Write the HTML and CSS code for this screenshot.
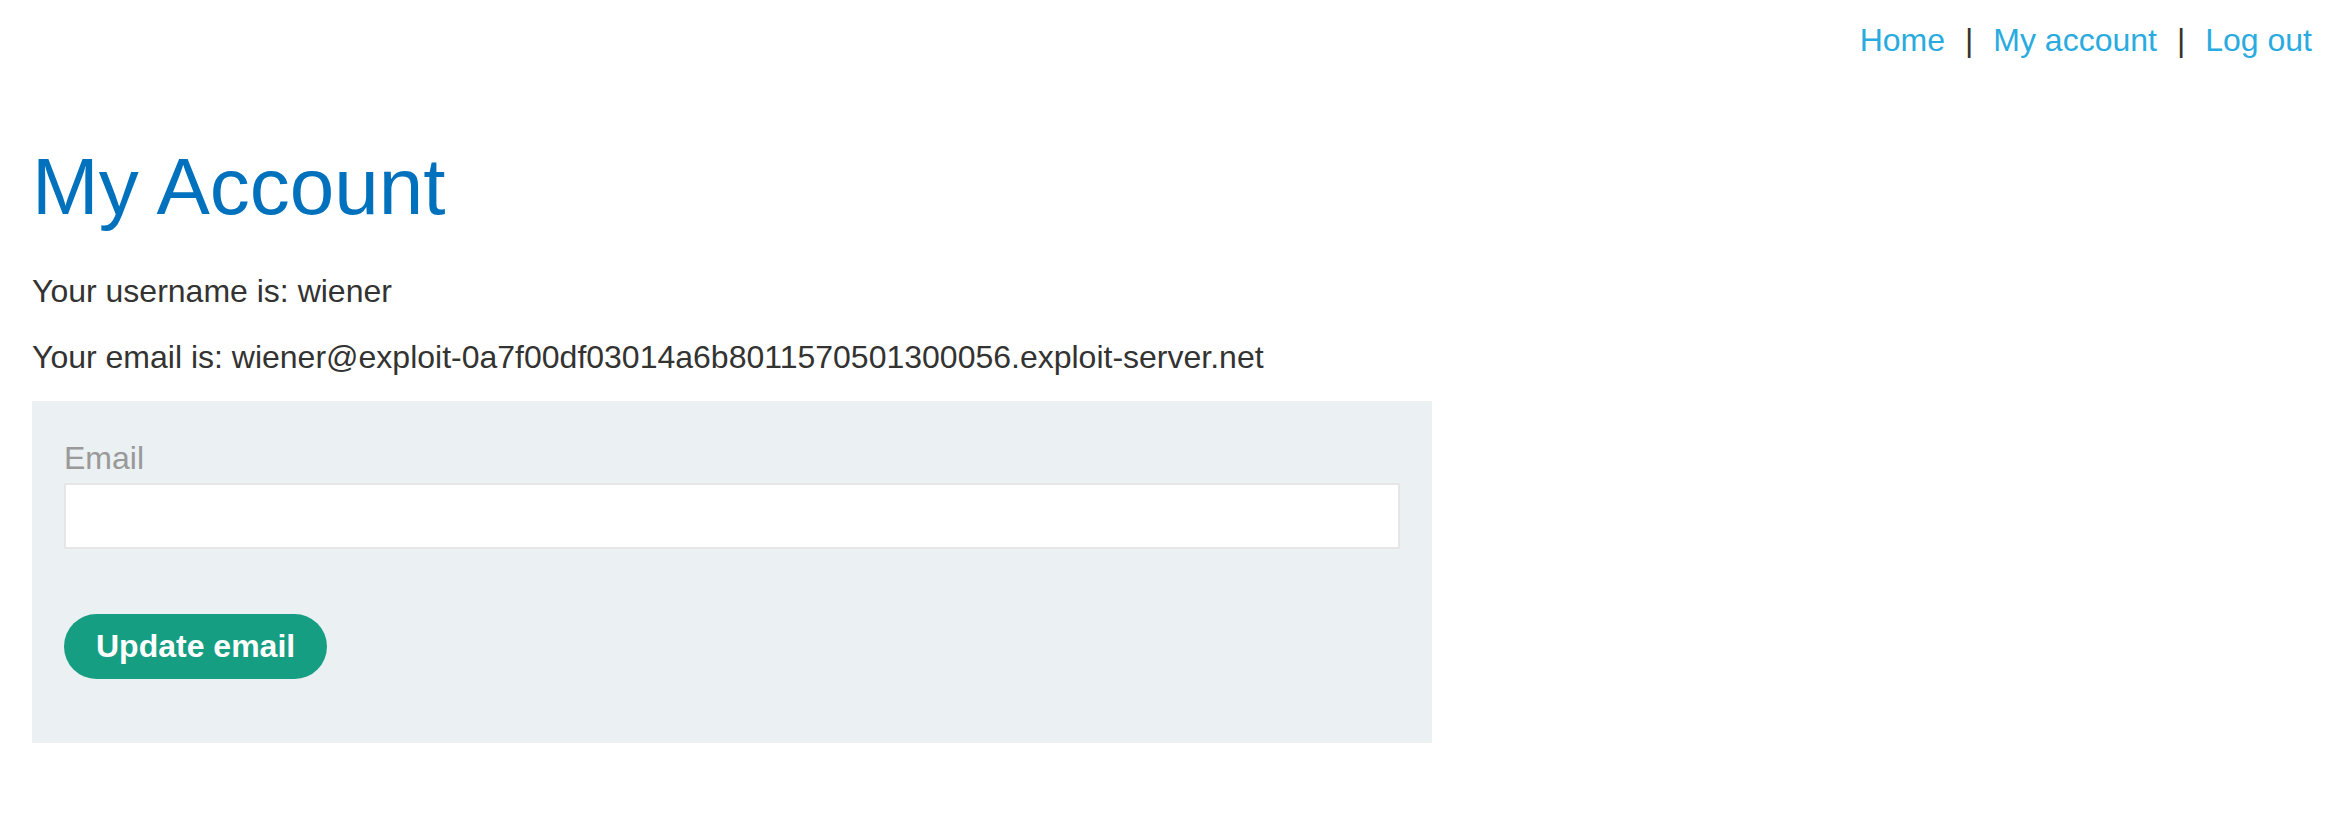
FILE: index.html
```html
<!DOCTYPE html>
<html lang="en">
<head>
<meta charset="utf-8">
<title>My Account</title>
<link rel="stylesheet" href="styles.css">
</head>
<body>
<header class="top-links">
  <a href="#" class="nav-link">Home</a><span class="sep">|</span><a href="#" class="nav-link">My account</a><span class="sep">|</span><a href="#" class="nav-link">Log out</a>
</header>
<main class="content">
  <h1 class="title">My Account</h1>
  <p class="info">Your username is: wiener</p>
  <p class="info">Your email is: wiener@exploit-0a7f00df03014a6b8011570501300056.exploit-server.net</p>
  <form class="email-form">
    <label class="field-label" for="email">Email</label>
    <input class="field-input" id="email" type="email" name="email">
    <button class="btn" type="button">Update email</button>
  </form>
</main>
</body>
</html>
```
FILE: styles.css
```css
html, body {
  margin: 0;
  padding: 0;
  background: #ffffff;
}
body {
  font-family: "Liberation Sans", Arial, Helvetica, sans-serif;
  font-size: 32px;
  color: #333332;
}
.top-links {
  display: flex;
  justify-content: flex-end;
  align-items: baseline;
  padding: 22px 16px 0 0;
  line-height: 37px;
}
.nav-link {
  color: #29abe0;
  text-decoration: none;
}
.sep {
  color: #333332;
  margin: 0 20px;
}
.content {
  padding: 0 32px;
}
.title {
  margin: 82px 0 36px;
  font-size: 80px;
  font-weight: normal;
  line-height: 92px;
  color: #0071bc;
}
.info {
  margin: 21px 0;
  line-height: 44.8px;
}
.email-form {
  width: 1400px;
  box-sizing: border-box;
  background: #ebf0f2;
  padding: 39px 32px 64px;
  display: flex;
  flex-direction: column;
  align-items: flex-start;
}
.field-label {
  color: #999999;
  line-height: 37px;
}
.field-input {
  margin-top: 6px;
  width: 100%;
  height: 66px;
  box-sizing: border-box;
  border: 2px solid #e6e6e6;
  background: #ffffff;
  font: inherit;
  padding: 0 12px;
  outline: none;
}
.btn {
  margin-top: 65px;
  height: 65px;
  padding: 0 32px;
  border: none;
  border-radius: 33px;
  background: #169e82;
  color: #ffffff;
  font-family: inherit;
  font-size: 32px;
  font-weight: bold;
  line-height: 65px;
  cursor: pointer;
}
```
